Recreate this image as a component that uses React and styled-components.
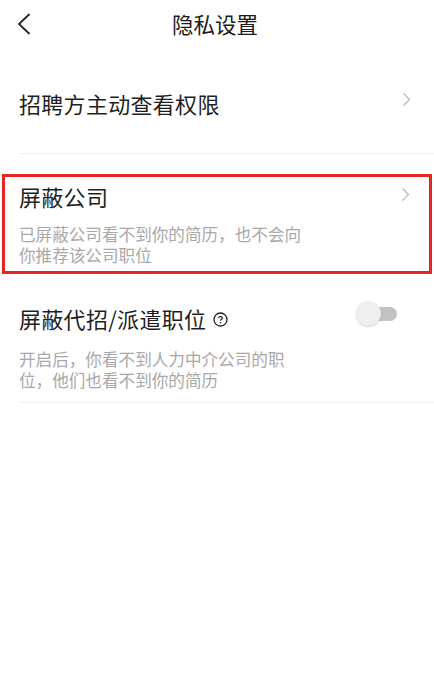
import React from 'react';
import styled, { createGlobalStyle } from 'styled-components';

const GlobalStyle = createGlobalStyle`
  html, body {
    margin: 0;
    padding: 0;
    background: #ffffff;
  }
  body {
    font-family: "Noto Sans CJK SC", "Noto Sans", sans-serif;
    color: #1f1f1f;
  }
`;

const Page = styled.div`
  width: 434px;
  min-height: 679px;
  background: #fff;
`;

const Header = styled.header`
  height: 48px;
  display: grid;
  grid-template-columns: 60px 1fr 60px;
  align-items: center;
`;

const BackButton = styled.button`
  border: none;
  background: none;
  padding: 0 0 0 17px;
  height: 48px;
  display: flex;
  align-items: center;
  cursor: pointer;
`;

const HeaderTitle = styled.h1`
  margin: 0;
  text-align: center;
  font-size: 21.5px;
  font-weight: 400;
  line-height: 30px;
  color: #1a1a1a;
  transform: translateX(-2px);
`;

const Row = styled.div`
  display: flex;
  align-items: flex-start;
  justify-content: space-between;
  padding: ${p => p.$pad};
  margin: ${p => p.$margin || '0'};
  border: ${p => (p.$highlight ? '3px solid #e52521' : 'none')};
  border-bottom: ${p =>
    p.$highlight ? '3px solid #e52521' : p.$divider ? '1px solid #efefef' : 'none'};
`;

const RowMain = styled.div`
  display: flex;
  flex-direction: column;
`;

const RowTitle = styled.div`
  display: flex;
  align-items: center;
  font-size: 22px;
  line-height: 30px;
  color: #1f1f1f;
  letter-spacing: 0.3px;
`;

const RowDesc = styled.div`
  margin-top: ${p => p.$gap || '13px'};
  font-size: 16.6px;
  line-height: 21px;
  color: #a8a8a8;
`;

const Chevron = styled.span`
  display: flex;
  margin-top: ${p => p.$top};
  margin-right: ${p => p.$right};
`;

const HelpIcon = styled.span`
  display: inline-flex;
  margin-left: 7px;
  margin-top: 3px;
`;

const Toggle = styled.div`
  position: relative;
  width: 42px;
  height: 26px;
  margin-top: -2px;
  margin-right: 36px;
`;

const Track = styled.div`
  position: absolute;
  left: 12px;
  top: 6px;
  width: 29px;
  height: 14px;
  border-radius: 7px;
  background: #c2c2c2;
`;

const Knob = styled.div`
  position: absolute;
  left: 0;
  top: 0;
  width: 25px;
  height: 25px;
  border-radius: 50%;
  background: #efefef;
  box-shadow: 0 1px 2px rgba(0, 0, 0, 0.18);
`;

const ArrowRight = () => (
  <svg width="9" height="15" viewBox="0 0 9 15">
    <path d="M1.5 1.5 L7.5 7.5 L1.5 13.5" fill="none" stroke="#bcbcbc" strokeWidth="1.4" />
  </svg>
);

const App = () => (
  <Page>
    <GlobalStyle />
    <Header>
      <BackButton aria-label="返回">
        <svg width="14" height="22" viewBox="0 0 14 22">
          <path d="M12.5 1 L2 11 L12.5 21" fill="none" stroke="#222" strokeWidth="1.8" />
        </svg>
      </BackButton>
      <HeaderTitle>隐私设置</HeaderTitle>
      <div />
    </Header>

    <Row $pad="40px 0 35px 0" $margin="0 0 0 19px" $divider>
      <RowMain>
        <RowTitle>招聘方主动查看权限</RowTitle>
      </RowMain>
      <Chevron $top="4px" $right="23px">
        <ArrowRight />
      </Chevron>
    </Row>

    <Row $pad="4px 0 5px 14px" $margin="20px 2px 0 2px" $highlight>
      <RowMain>
        <RowTitle>屏蔽公司</RowTitle>
        <RowDesc>
          已屏蔽公司看不到你的简历，也不会向
          <br />
          你推荐该公司职位
        </RowDesc>
      </RowMain>
      <Chevron $top="6px" $right="19px">
        <ArrowRight />
      </Chevron>
    </Row>

    <Row $pad="29px 0 11px 0" $margin="0 0 0 19px" $divider>
      <RowMain>
        <RowTitle>
          屏蔽代招/派遣职位
          <HelpIcon>
            <svg width="15" height="15" viewBox="0 0 15 15">
              <circle cx="7.5" cy="7.5" r="6.5" fill="none" stroke="#222" strokeWidth="1.3" />
              <path
                d="M5.6 6 C5.6 4.2 9.4 4.2 9.4 6 C9.4 7.3 7.5 7.3 7.5 8.8"
                fill="none"
                stroke="#222"
                strokeWidth="1.2"
              />
              <circle cx="7.5" cy="10.7" r="0.8" fill="#222" />
            </svg>
          </HelpIcon>
        </RowTitle>
        <RowDesc $gap="16px">
          开启后，你看不到人力中介公司的职
          <br />
          位，他们也看不到你的简历
        </RowDesc>
      </RowMain>
      <Toggle>
        <Track />
        <Knob />
      </Toggle>
    </Row>
  </Page>
);

export default App;
